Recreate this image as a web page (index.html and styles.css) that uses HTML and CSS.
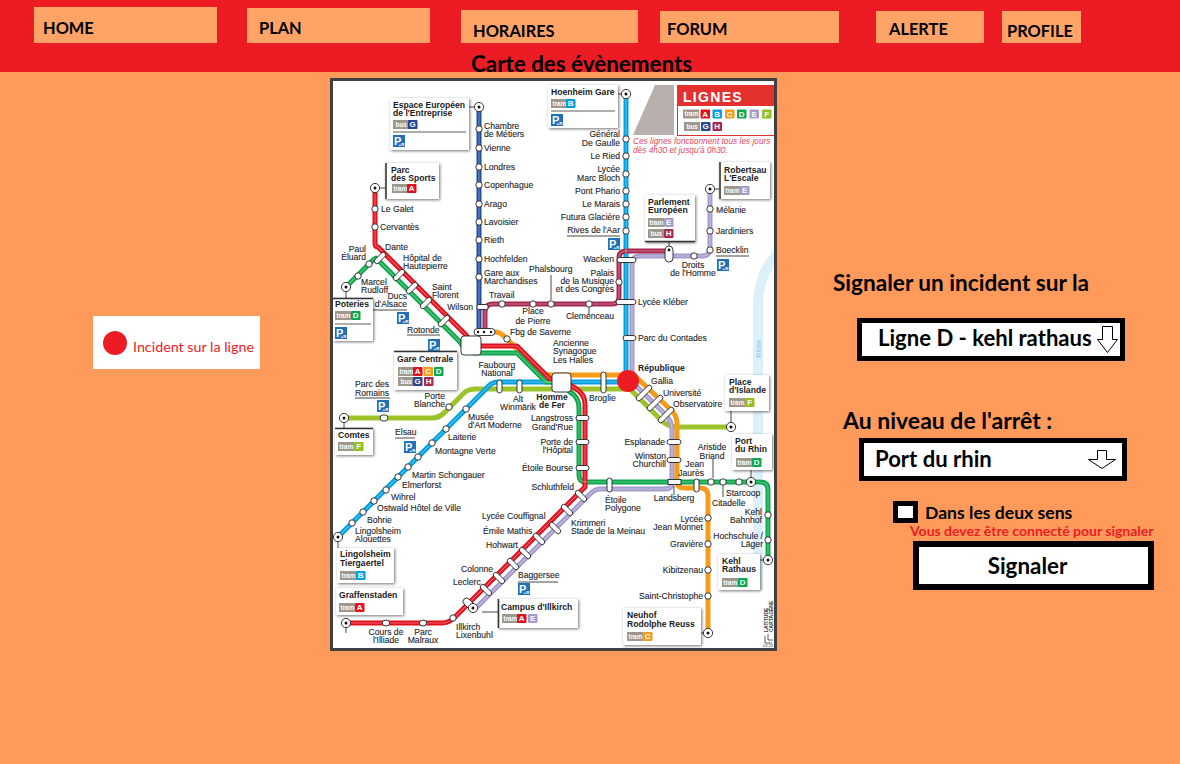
FILE: index.html
```html
<!DOCTYPE html>
<html lang="fr">
<head>
  <meta charset="UTF-8" />
  <meta name="viewport" content="width=device-width, initial-scale=1.0"/>
  <title>Carte des évènements</title>
  <link rel="stylesheet" href="styles.css">
</head>
<body>
  <header class="top">
    <nav class="menu">
      <a class="menu-item home">HOME</a>
      <a class="menu-item plan">PLAN</a>
      <a class="menu-item horaires">HORAIRES</a>
      <a class="menu-item forum">FORUM</a>
      <a class="menu-item alerte">ALERTE</a>
      <a class="menu-item profile">PROFILE</a>
    </nav>
    <h1 class="page-title">Carte des évènements</h1>
  </header>

  <main class="content">
    <div class="legend">
      <span class="legend-dot"></span>
      <span class="legend-label">Incident sur la ligne</span>
    </div>

    <div class="map">
      <svg class="map-svg" viewBox="333 81 441 567" width="441" height="567">
        <defs>
          <g id="term"><circle class="st" r="4.6"/><circle class="dot" r="1.5"/></g>
          <g id="pr"><rect class="pr-box" width="12" height="12"/><text class="pr-p" x="1" y="9.5">P</text><text class="pr-r" x="5.6" y="11">+R</text></g>
          <g id="tram"><rect class="chip" width="16" height="9"/><text class="chip-t" x="1.5" y="6.7">tram</text></g>
          <g id="bus"><rect class="chip" width="16" height="9"/><text class="chip-t" x="2.5" y="6.7">bus</text></g>
          <g id="kA"><rect class="k ka" width="9.5" height="9" rx="1"/><text class="k-t" x="4.7" y="7.3">A</text></g>
          <g id="kB"><rect class="k kb" width="9.5" height="9" rx="1"/><text class="k-t" x="4.7" y="7.3">B</text></g>
          <g id="kC"><rect class="k kc" width="9.5" height="9" rx="1"/><text class="k-t" x="4.7" y="7.3">C</text></g>
          <g id="kD"><rect class="k kd" width="9.5" height="9" rx="1"/><text class="k-t" x="4.7" y="7.3">D</text></g>
          <g id="kE"><rect class="k ke" width="9.5" height="9" rx="1"/><text class="k-t" x="4.7" y="7.3">E</text></g>
          <g id="kF"><rect class="k kf" width="9.5" height="9" rx="1"/><text class="k-t" x="4.7" y="7.3">F</text></g>
          <g id="kG"><rect class="k kg" width="9.5" height="9" rx="1"/><text class="k-t" x="4.7" y="7.3">G</text></g>
          <g id="kH"><rect class="k kh" width="9.5" height="9" rx="1"/><text class="k-t" x="4.7" y="7.3">H</text></g>

          <path id="la" d="M375 188 V243 Q375 247 378 247 L466 335 Q472 346 482 346 H517 L550 379 H560 L575 388 Q585 394 585 404 V487 L471 601 L455 617 Q449 623 442 623 H346"/>
          <path id="lb" d="M626 94 V374 Q626 382 618 382 H498 Q491 382 486 389 L338 537"/>
          <path id="lc" d="M495 332 Q500 332 505 337 L538 370 Q543 375 552 375 H634 L672 411 Q677 416 677 424 V482 Q677 488 684 488 H700 Q708 488 708 496 V633"/>
          <path id="ld" d="M346 287 L369 264 Q375 258 376 258 L460 342 Q466 353 475 353 H517 L546 382 H560 L570 392 Q579 397 579 408 V475 Q579 482 586 482 H760 Q768 482 768 490 V560"/>
          <path id="le" d="M710 189 V248 Q710 256 702 256 H640 Q632 256 632 264 V382 L665 414 Q672 421 672 430 V483 Q672 489 665 489 H600 Q595 489 590 494 L473 611"/>
          <path id="lf" d="M344 418 H432 Q440 418 446 411 L464 393 Q468 389 476 389 H630 L660 419 Q668 427 676 427 H731"/>
          <path id="lg" d="M479 107 V332"/>
          <path id="lh" d="M485 332 V312 Q485 304 493 304 H612 Q619 304 619 297 V258 Q619 251 626 251 H669"/>
        </defs>

        <path class="river" d="M780 252 Q758 272 758 305 V590"/>
        <text class="rhin" transform="translate(761 358) rotate(-90)">Rhin</text>
        <polygon class="wedge" points="655,85 674,85 674,135 633,135"/>

        <!-- lines -->
        <g class="casing">
          <use href="#lb"/><use href="#lf"/><use href="#lc"/><use href="#la"/><use href="#ld"/><use href="#le"/><use href="#lg"/><use href="#lh"/>
        </g>
        <g class="line"><use class="c-f" href="#lf"/><use class="c-e" href="#le"/><use class="c-c" href="#lc"/><use class="c-b" href="#lb"/><use class="c-d" href="#ld"/><use class="c-a" href="#la"/><use class="c-h" href="#lh"/><use class="c-g" href="#lg"/></g>
        <g class="shine"><use href="#la"/><use href="#ld"/><use href="#lh"/><use href="#lg"/><use href="#lb"/><use href="#le"/></g>

        <!-- leader lines -->
        <g class="lead">
          <path d="M469 107 H475 M439 188 H380 M344 423 V428 M338 541 V548 M346 627 V633 M346 288 V298 M373 310 H407 M482 612 L498 612 M725 189 H715 M731 411 V423 M751 470 V478 M760 560 H764 M701 633 H704 M669 242 V246 M618 94 H622 M589 304 V315 M551 275 V300 M713 459 V478 M723 485 V497 M674 486 V495"/>
          <path d="M407 335 H440 M567 236 H620 M716 256 H749 M355 398 H390 M395 438 H415 M518 582 H558"/>
        </g>

        <!-- stations -->
        <g class="st">
          <circle r="3.2" cx="479" cy="129"/><circle r="3.2" cx="479" cy="148"/><circle r="3.2" cx="479" cy="167"/><circle r="3.2" cx="479" cy="185"/><circle r="3.2" cx="479" cy="204"/><circle r="3.2" cx="479" cy="222"/><circle r="3.2" cx="479" cy="240"/><circle r="3.2" cx="479" cy="259"/><circle r="3.2" cx="479" cy="277"/>
          <circle r="3.2" cx="375" cy="209"/><circle r="3.2" cx="375" cy="227"/>
          <circle r="3.2" cx="369" cy="264"/><circle r="3.2" cx="358" cy="276"/>
          <circle r="3.2" cx="502" cy="304"/><circle r="3.2" cx="533" cy="304"/><circle r="3.2" cx="551" cy="304"/><circle r="3.2" cx="589" cy="304"/>
          <circle r="3.2" cx="507" cy="339"/>
          <circle r="3.2" cx="626" cy="139"/><circle r="3.2" cx="626" cy="156"/><circle r="3.2" cx="626" cy="174"/><circle r="3.2" cx="626" cy="191"/><circle r="3.2" cx="626" cy="204"/><circle r="3.2" cx="626" cy="217"/><circle r="3.2" cx="626" cy="231"/>
          <circle r="3.2" cx="619" cy="282"/>
          <circle r="3.2" cx="710" cy="209"/><circle r="3.2" cx="710" cy="231"/><circle r="3.2" cx="710" cy="250"/><circle r="3.2" cx="694" cy="256"/>
          <circle r="3.2" cx="466" cy="409"/><circle r="3.2" cx="446" cy="429"/><circle r="3.2" cx="432" cy="443"/><circle r="3.2" cx="418" cy="457"/><circle r="3.2" cx="408" cy="467"/><circle r="3.2" cx="398" cy="477"/><circle r="3.2" cx="386" cy="490"/><circle r="3.2" cx="374" cy="501"/><circle r="3.2" cx="363" cy="512"/><circle r="3.2" cx="352" cy="523"/>
          <circle r="3.2" cx="449" cy="407"/><ellipse rx="4" ry="3.2" cx="384" cy="418"/>
          <circle r="3.2" cx="453" cy="618"/><ellipse rx="3.6" ry="3" cx="423" cy="623"/><ellipse rx="3.8" ry="3" cx="386" cy="623"/>
          <circle r="3.2" cx="711" cy="482"/><circle r="3.2" cx="723" cy="482"/><circle r="3.2" cx="739" cy="482"/>
          <circle r="3.2" cx="768" cy="515"/><circle r="3.2" cx="768" cy="540"/>
          <circle r="3.2" cx="708" cy="518"/><circle r="3.2" cx="708" cy="544"/><circle r="3.2" cx="708" cy="570"/><circle r="3.2" cx="708" cy="596"/>

          <rect x="477" y="304.5" width="11" height="5" rx="1.5"/>
          <rect x="617" y="257.5" width="19" height="5" rx="2.5"/><rect x="616" y="299.5" width="20" height="5" rx="2.5"/><rect x="623" y="335.5" width="13" height="5" rx="2.5"/>
          <rect x="665" y="246" width="8" height="16" rx="4"/>
          <rect x="497" y="380" width="5" height="13" rx="2.5"/><rect x="517" y="380" width="5" height="13" rx="2.5"/><rect x="601" y="372" width="5" height="21" rx="2.5"/>
          <rect x="667" y="439.5" width="14" height="5" rx="2.5"/><rect x="667" y="457.5" width="14" height="5" rx="2.5"/><rect x="668" y="479.5" width="13" height="5"/>
          <rect x="576" y="415.5" width="13" height="5" rx="2.5"/><rect x="576" y="439.5" width="13" height="5" rx="2.5"/><rect x="576" y="465.5" width="13" height="5" rx="2.5"/>
          <rect x="607" y="478" width="5" height="14" rx="2.5"/><rect x="694" y="479" width="5" height="13" rx="2.5"/>
          <rect x="474" y="328.5" width="21" height="7" rx="3.5"/>

          <rect class="tilt" x="-7" y="-2.5" width="14" height="5" rx="2.5" transform="translate(380 258) rotate(-45)"/>
          <rect class="tilt" x="-7" y="-2.5" width="14" height="5" rx="2.5" transform="translate(399 275) rotate(-45)"/>
          <rect class="tilt" x="-7" y="-2.5" width="14" height="5" rx="2.5" transform="translate(412 288) rotate(-45)"/>
          <rect class="tilt" x="-7" y="-2.5" width="14" height="5" rx="2.5" transform="translate(426 303) rotate(-45)"/>
          <rect class="tilt" x="-7" y="-2.5" width="14" height="5" rx="2.5" transform="translate(444 321) rotate(-45)"/>
          <rect class="tilt" x="-10" y="-2.5" width="20" height="5" rx="2.5" transform="translate(644 393) rotate(-45)"/>
          <rect class="tilt" x="-10" y="-2.5" width="20" height="5" rx="2.5" transform="translate(655 403) rotate(-45)"/>
          <rect class="tilt" x="-10" y="-2.5" width="20" height="5" rx="2.5" transform="translate(666 415) rotate(-45)"/>
          <rect class="tilt" x="-7" y="-2.5" width="14" height="5" rx="2.5" transform="translate(581 496) rotate(45)"/>
          <rect class="tilt" x="-7" y="-2.5" width="14" height="5" rx="2.5" transform="translate(567 510) rotate(45)"/>
          <rect class="tilt" x="-7" y="-2.5" width="14" height="5" rx="2.5" transform="translate(555 528) rotate(45)"/>
          <rect class="tilt" x="-7" y="-2.5" width="14" height="5" rx="2.5" transform="translate(539 539) rotate(45)"/>
          <rect class="tilt" x="-7" y="-2.5" width="14" height="5" rx="2.5" transform="translate(525 553) rotate(45)"/>
          <rect class="tilt" x="-7" y="-2.5" width="14" height="5" rx="2.5" transform="translate(513 564) rotate(45)"/>
          <rect class="tilt" x="-7" y="-2.5" width="14" height="5" rx="2.5" transform="translate(499 578) rotate(45)"/>
          <rect class="tilt" x="-7" y="-2.5" width="14" height="5" rx="2.5" transform="translate(486 590) rotate(45)"/>
          <rect class="tilt" x="-7" y="-3.5" width="14" height="7" rx="3.5" transform="translate(469 604) rotate(45)"/>

          <rect x="461" y="336" width="20" height="19" rx="3"/>
          <rect x="552" y="373" width="19" height="19" rx="3"/>
        </g>
        <circle class="dot" r="1.2" cx="478" cy="332"/><circle class="dot" r="1.2" cx="484" cy="332"/><circle class="dot" r="1.2" cx="491" cy="332"/>
        <circle class="dot" r="1.4" cx="669" cy="250"/>

        <use href="#term" x="479" y="107"/><use href="#term" x="375" y="188"/><use href="#term" x="346" y="287"/>
        <use href="#term" x="626" y="94"/><use href="#term" x="710" y="189"/><use href="#term" x="344" y="418"/>
        <use href="#term" x="338" y="537"/><use href="#term" x="346" y="623"/><use href="#term" x="473" y="608"/>
        <use href="#term" x="731" y="427"/><use href="#term" x="751" y="482"/><use href="#term" x="768" y="560"/><use href="#term" x="708" y="633"/>

        <!-- cards -->
        <g class="card">
          <rect x="390" y="98" width="79" height="52"/><rect x="385" y="163" width="54" height="36"/>
          <rect x="548" y="85" width="70" height="43"/><rect x="333" y="298" width="40" height="43"/>
          <rect x="394" y="351" width="63" height="39"/><rect x="335" y="428" width="38" height="27"/>
          <rect x="337" y="548" width="57" height="35"/><rect x="336" y="588" width="67" height="27"/>
          <rect x="498" y="599" width="80" height="29"/><rect x="623" y="608" width="78" height="37"/>
          <rect x="718" y="554" width="42" height="36"/><rect x="732" y="434" width="40" height="36"/>
          <rect x="725" y="375" width="44" height="36"/><rect x="719" y="162" width="51" height="37"/>
          <rect x="645" y="195" width="50" height="47"/>
        </g>
        <path class="bar" d="M386 163 V199 M720 162 V199 M335 428.5 H373 M498.5 599 V628 M333 298.5 H373 M394 351.5 H457 M645 241.5 H695"/>
        <path class="rule" d="M393 132 H466 M551 111 H615 M335 324 H371"/>

        <g class="ttl">
          <text x="393" y="108">Espace Européen</text><text x="393" y="116">de l'Entreprise</text>
          <text x="391" y="173">Parc</text><text x="391" y="181">des Sports</text>
          <text x="551" y="95">Hoenheim Gare</text>
          <text x="335" y="307">Poteries</text>
          <text x="397" y="362">Gare Centrale</text>
          <text x="338" y="438">Comtes</text>
          <text x="340" y="557">Lingolsheim</text><text x="340" y="566">Tiergaertel</text>
          <text x="339" y="598">Graffenstaden</text>
          <text x="501" y="610">Campus d'Illkirch</text>
          <text x="627" y="618">Neuhof</text><text x="627" y="627">Rodolphe Reuss</text>
          <text x="722" y="564">Kehl</text><text x="722" y="572">Rathaus</text>
          <text x="735" y="444">Port</text><text x="735" y="452">du Rhin</text>
          <text x="729" y="385">Place</text><text x="729" y="393">d'Islande</text>
          <text x="724" y="173">Robertsau</text><text x="724" y="181">L'Escale</text>
          <text x="648" y="205">Parlement</text><text x="648" y="213">Européen</text>
        </g>

        <use href="#bus" x="393" y="120"/><use href="#kG" x="408" y="120"/>
        <use href="#pr" x="393" y="135"/>
        <use href="#tram" x="392" y="184"/><use href="#kA" x="407" y="184"/>
        <use href="#tram" x="551" y="99"/><use href="#kB" x="566" y="99"/>
        <use href="#pr" x="551" y="114"/>
        <use href="#tram" x="335" y="311"/><use href="#kD" x="351" y="311"/>
        <use href="#pr" x="335" y="327"/>
        <use href="#tram" x="398" y="367"/><use href="#kA" x="413" y="367"/><use href="#kC" x="423.5" y="367"/><use href="#kD" x="434" y="367"/>
        <use href="#bus" x="398" y="377"/><use href="#kG" x="413" y="377"/><use href="#kH" x="424" y="377"/>
        <use href="#tram" x="338" y="442"/><use href="#kF" x="354" y="442"/>
        <use href="#tram" x="340" y="571"/><use href="#kB" x="356" y="571"/>
        <use href="#tram" x="339" y="603"/><use href="#kA" x="355" y="603"/>
        <use href="#tram" x="502" y="614"/><use href="#kA" x="517" y="614"/><use href="#kE" x="528" y="614"/>
        <use href="#tram" x="627" y="632"/><use href="#kC" x="643" y="632"/>
        <use href="#tram" x="722" y="578"/><use href="#kD" x="738" y="578"/>
        <use href="#tram" x="736" y="458"/><use href="#kD" x="752" y="458"/>
        <use href="#tram" x="729" y="398"/><use href="#kF" x="745" y="398"/>
        <use href="#tram" x="724" y="186"/><use href="#kE" x="740" y="186"/>
        <use href="#tram" x="648" y="218"/><use href="#kE" x="664" y="218"/>
        <use href="#bus" x="648" y="229"/><use href="#kH" x="664" y="229"/>

        <use href="#pr" x="397" y="312"/><use href="#pr" x="428" y="339"/><use href="#pr" x="608" y="238"/><use href="#pr" x="717" y="259"/>
        <use href="#pr" x="377" y="400"/><use href="#pr" x="404" y="441"/><use href="#pr" x="518" y="583"/>

        <!-- lignes box -->
        <rect class="lignes-box" x="677.5" y="85.5" width="100" height="50"/>
        <rect class="lignes-head" x="677" y="85" width="98" height="21"/>
        <text class="lignes-t" x="683" y="102">LIGNES</text>
        <use href="#tram" x="683" y="109.5"/><use href="#kA" x="700.5" y="109.5"/><use href="#kB" x="712.5" y="109.5"/><use href="#kC" x="725" y="109.5"/><use href="#kD" x="737" y="109.5"/><use href="#kE" x="749.5" y="109.5"/><use href="#kF" x="762" y="109.5"/>
        <use href="#bus" x="684" y="122"/><use href="#kG" x="701" y="122"/><use href="#kH" x="712.5" y="122"/>
        <text class="note" x="633" y="144">Ces lignes fonctionnent  tous les jours</text>
        <text class="note" x="633" y="153">dès 4h30 et jusqu'à 0h30.</text>

        <!-- labels, left aligned -->
        <g class="lbl">
          <text x="484" y="129">Chambre</text><text x="484" y="137">de Métiers</text><text x="484" y="151">Vienne</text><text x="484" y="170">Londres</text><text x="484" y="188">Copenhague</text><text x="484" y="207">Arago</text><text x="484" y="225">Lavoisier</text><text x="484" y="243">Rieth</text><text x="484" y="262">Hochfelden</text><text x="484" y="276">Gare aux</text><text x="484" y="284">Marchandises</text>
          <text x="381" y="212">Le Galet</text><text x="380" y="230">Cervantès</text><text x="385" y="250">Dante</text>
          <text x="361" y="285">Marcel</text><text x="361" y="293">Rudloff</text>
          <text x="403" y="261">Hôpital de</text><text x="403" y="269">Hautepierre</text>
          <text x="432" y="290">Saint</text><text x="432" y="298">Florent</text>
          <text x="407" y="333">Rotonde</text><text x="489" y="298">Travail</text><text x="529" y="272">Phalsbourg</text><text x="510" y="335">Fbg de Saverne</text>
          <text x="553" y="346">Ancienne</text><text x="553" y="354">Synagogue</text><text x="553" y="363">Les Halles</text>
          <text x="638" y="305">Lycée Kléber</text><text x="638" y="341">Parc du Contades</text>
          <text x="716" y="213">Mélanie</text><text x="716" y="234">Jardiniers</text><text x="716" y="253">Boecklin</text>
          <text x="468" y="420">Musée</text><text x="468" y="428">d'Art Moderne</text><text x="448" y="440">Laiterie</text><text x="435" y="454">Montagne Verte</text><text x="412" y="478">Martin Schongauer</text><text x="402" y="488">Elmerforst</text><text x="391" y="500">Wihrel</text><text x="377" y="511">Ostwald Hôtel de Ville</text><text x="367" y="523">Bohrie</text><text x="355" y="534">Lingolsheim</text><text x="355" y="542">Alouettes</text>
          <text x="395" y="435">Elsau</text>
          <text x="482" y="519">Lycée Couffignal</text><text x="483" y="534">Émile Mathis</text><text x="486" y="548">Hohwart</text><text x="461" y="572">Colonne</text><text x="453" y="585">Leclerc</text><text x="518" y="578">Baggersee</text><text x="456" y="630">Illkirch</text><text x="456" y="638">Lixenbuhl</text>
          <text x="589" y="401">Broglie</text><text x="651" y="384">Gallia</text><text x="663" y="396">Université</text><text x="673" y="407">Observatoire</text>
          <text x="726" y="496">Starcoop</text><text x="712" y="506">Citadelle</text><text x="605" y="503">Étoile</text><text x="605" y="511">Polygone</text><text x="571" y="526">Krimmeri</text><text x="571" y="534">Stade de la Meinau</text>
        </g>
        <text class="ttl-sm" x="638" y="371">République</text>
        <text class="ttl-sm mid" x="552" y="400">Homme</text><text class="ttl-sm mid" x="552" y="408">de Fer</text>

        <!-- labels, right aligned -->
        <g class="lbl end">
          <text x="366" y="252">Paul</text><text x="366" y="260">Éluard</text>
          <text x="407" y="299">Ducs</text><text x="407" y="307">d'Alsace</text>
          <text x="473" y="310">Wilson</text>
          <text x="620" y="137">Général</text><text x="620" y="146">De Gaulle</text><text x="620" y="159">Le Ried</text><text x="620" y="172">Lycée</text><text x="620" y="181">Marc Bloch</text><text x="620" y="194">Pont Phario</text><text x="620" y="207">Le Marais</text><text x="620" y="220">Futura Glacière</text><text x="620" y="233">Rives de l'Aar</text>
          <text x="614" y="262">Wacken</text><text x="614" y="276">Palais</text><text x="614" y="284">de la Musique</text><text x="614" y="292">et des Congrès</text>
          <text x="389" y="387">Parc des</text><text x="389" y="396">Romains</text>
          <text x="445" y="399">Porte</text><text x="445" y="407">Blanche</text>
          <text x="573" y="421">Langstross</text><text x="573" y="430">Grand'Rue</text><text x="573" y="445">Porte de</text><text x="573" y="453">l'Hôpital</text><text x="573" y="471">Étoile Bourse</text><text x="574" y="490">Schluthfeld</text>
          <text x="665" y="445">Esplanade</text><text x="666" y="459">Winston</text><text x="666" y="467">Churchill</text>
          <text x="704" y="467">Jean</text><text x="704" y="476">Jaurès</text>
          <text x="703" y="522">Lycée</text><text x="703" y="530">Jean Monnet</text><text x="703" y="547">Gravière</text><text x="703" y="573">Kibitzenau</text><text x="703" y="599">Saint-Christophe</text>
          <text x="762" y="515">Kehl</text><text x="762" y="523">Bahnhof</text><text x="763" y="539">Hochschule /</text><text x="763" y="547">Läger</text>
        </g>

        <!-- labels, centred -->
        <g class="lbl mid">
          <text x="533" y="314">Place</text><text x="533" y="324">de Pierre</text>
          <text x="497" y="368">Faubourg</text><text x="497" y="376">National</text>
          <text x="590" y="319">Clemenceau</text>
          <text x="693" y="268">Droits</text><text x="693" y="276">de l'Homme</text>
          <text x="518" y="402">Alt</text><text x="518" y="410">Winmärik</text>
          <text x="712" y="450">Aristide</text><text x="712" y="459">Briand</text>
          <text x="674" y="501">Landsberg</text>
          <text x="386" y="635">Cours de</text><text x="386" y="643">l'Illiade</text>
          <text x="423" y="635">Parc</text><text x="423" y="643">Malraux</text>
        </g>

        <text class="credit" transform="translate(768 632) rotate(-90)">LATITUDE</text>
        <text class="credit" transform="translate(773 632) rotate(-90)">CARTAGÈNE</text>
        <path class="credit-mark" d="M765 636 V643 H772 M768 634 V640 H773"/>
        <text class="stamp" x="763" y="647">03.23</text>

        <!-- incident marker -->
        <circle class="marker" cx="628" cy="381" r="11"/>
      </svg>
    </div>

    <section class="report">
      <h2 class="report-title">Signaler un incident sur la</h2>
      <div class="picker line-picker">
        <span>Ligne D - kehl rathaus</span>
        <svg class="arrow" width="21" height="27" viewBox="0 0 21 27"><path d="M5.5 .5 H15.5 V13.5 H20.5 L10.5 26.5 L.5 13.5 H5.5 Z"/></svg>
      </div>
      <h2 class="report-title stop-title">Au niveau de l'arrêt :</h2>
      <div class="picker stop-picker">
        <span>Port du rhin</span>
        <svg class="arrow" width="28" height="19" viewBox="0 0 28 19"><path d="M9.5 .5 H18.5 V9.5 H27.5 L14 18.5 L.5 9.5 H9.5 Z"/></svg>
      </div>
      <label class="both-ways"><span class="check"></span>Dans les deux sens</label>
      <p class="login-note">Vous devez être connecté pour signaler</p>
      <button class="send" type="button">Signaler</button>
    </section>
  </main>
</body>
</html>
```

FILE: styles.css
```css
body {
  font-family: Lato, "Open Sans", sans-serif;
  margin: 0;
  padding: 0;
  background-color: #ff9a5a;
  color: black;
  height: 764px;
  overflow: hidden;
}

/* header */
.top {
  background-color: #ed1c24;
  height: 72px;
}
.menu {
  display: flex;
  align-items: flex-end;
  height: 43px;
  padding-left: 34px;
}
.menu-item {
  display: block;
  background-color: #ffa366;
  font-weight: bold;
  font-size: 16.4px;
  line-height: 20px;
  box-sizing: border-box;
}
.home { width: 183px; height: 36px; padding: 11px 0 0 9px; }
.plan { width: 183px; height: 35px; margin-left: 30px; padding: 10px 0 0 12px; }
.horaires { width: 177px; height: 33px; margin-left: 31px; padding: 11px 0 0 12px; }
.forum { width: 179px; height: 32px; margin-left: 22px; padding: 8px 0 0 7px; }
.alerte { width: 108px; height: 32px; margin-left: 37px; padding: 8px 0 0 13px; }
.profile { width: 79px; height: 32px; margin-left: 18px; padding: 10px 0 0 5px; }
.page-title {
  margin: 7px 0 0 471px;
  font-size: 22.4px;
  line-height: 28px;
  font-weight: bold;
}

/* main row */
.content {
  display: flex;
  align-items: flex-start;
  padding: 6px 0 0 93px;
}
.legend {
  display: flex;
  align-items: center;
  gap: 6px;
  width: 167px;
  height: 53px;
  box-sizing: border-box;
  margin-top: 238px;
  padding-left: 10px;
  background: white;
  color: #ed1c24;
  font-size: 14.3px;
}
.legend-dot {
  width: 24px;
  height: 24px;
  border-radius: 50%;
  background-color: #ed1c24;
}
.legend-label {
  margin-top: 8px;
}
.map {
  margin-left: 70px;
  border: 3px solid #404040;
  background: white;
  line-height: 0;
}

/* report form */
.report {
  display: flex;
  flex-direction: column;
  align-items: flex-start;
  margin-left: 56px;
  padding-top: 192px;
  width: 330px;
}
.report-title {
  margin: 0;
  font-size: 22.6px;
  line-height: 26px;
  font-weight: bold;
}
.picker {
  display: flex;
  align-items: center;
  justify-content: space-between;
  box-sizing: border-box;
  width: 268px;
  height: 43px;
  border: 5px solid black;
  background: white;
  font-weight: bold;
  font-size: 22.1px;
}
.line-picker { margin: 22px 0 0 24px; padding: 0 2px 0 16px; }
.line-picker span { margin-bottom: 4px; }
.stop-title { margin: 46px 0 0 10px; font-size: 23px; }
.stop-picker { margin: 5px 0 0 26px; padding: 0 6px 0 11px; }
.stop-picker span { margin-bottom: 2px; }
.arrow path {
  fill: white;
  stroke: black;
  stroke-width: 1;
}
.both-ways {
  display: flex;
  align-items: center;
  gap: 7px;
  margin: 20px 0 0 60px;
  font-weight: bold;
  font-size: 17.6px;
}
.check {
  width: 25px;
  height: 22px;
  box-sizing: border-box;
  border: 5px solid black;
  background: white;
}
.login-note {
  margin: -1px 0 1px 77px;
  color: #ed1c24;
  font-weight: bold;
  font-size: 14px;
  line-height: 18px;
}
.send {
  margin: 0 0 0 80px;
  width: 241px;
  height: 49px;
  border: 6px solid black;
  background: white;
  font-family: inherit;
  font-weight: bold;
  font-size: 22.4px;
  padding: 0 12px 0 0;
}

/* map drawing */
.map-svg text { font-family: "Liberation Sans", Arial, sans-serif; }
.river { fill: none; stroke: #dcf0fa; stroke-width: 10; }
.rhin { fill: #9fd3e8; font-size: 8px; font-weight: bold; }
.wedge { fill: #b8b0ac; }
.casing use { fill: none; stroke: white; stroke-width: 6.5; }
.line use { fill: none; stroke-width: 5; stroke-linejoin: round; }
.shine use { fill: none; stroke: white; stroke-opacity: .35; stroke-width: 1.1; }
.c-a { stroke: #e30f1d; }
.c-b { stroke: #00a0e2; }
.c-c { stroke: #f59c1a; }
.c-d { stroke: #0ba84a; }
.c-e { stroke: #a59ccd; }
.c-f { stroke: #9dc32b; }
.c-g { stroke: #1f4e9e; }
.c-h { stroke: #a8294f; }
.lead { fill: none; stroke: #333; stroke-width: .9; }
.st { fill: white; stroke: #222; stroke-width: .9; }
.dot { fill: #111; stroke: none; }
.card rect { fill: white; filter: drop-shadow(1.5px 1.5px 1.5px rgba(0, 0, 0, .55)); }
.bar { fill: none; stroke: #333; stroke-width: 1.6; }
.rule { fill: none; stroke: #333; stroke-width: .8; }
.ttl text, .ttl-sm { font-size: 8.6px; font-weight: bold; fill: #1b1b1b; }
.lbl text { font-size: 8.6px; fill: #1f1f2c; stroke: #1f1f2c; stroke-width: .12; }
.end text { text-anchor: end; }
.mid text, text.mid { text-anchor: middle; }
.chip { fill: #9d988a; }
.chip-t { font-size: 6.4px; font-weight: bold; fill: white; }
.k-t { font-size: 8px; font-weight: bold; fill: white; text-anchor: middle; }
.ka { fill: #e30f1d; }
.kb { fill: #00a0e2; }
.kc { fill: #f59c1a; }
.kd { fill: #0ba84a; }
.ke { fill: #a59ccd; }
.kf { fill: #93c01f; }
.kg { fill: #27469a; }
.kh { fill: #a8294f; }
.pr-box { fill: #1f70b8; }
.pr-p { font-size: 11px; font-weight: bold; fill: white; }
.pr-r { font-size: 4.4px; font-weight: bold; fill: white; }
.lignes-box { fill: white; stroke: #e4312f; stroke-width: 1; }
.lignes-head { fill: #e4312f; }
.lignes-t { font-size: 14px; font-weight: bold; fill: white; letter-spacing: 1.3px; }
.note { font-size: 8.3px; font-style: italic; fill: #e8465f; }
.credit { font-size: 5px; font-weight: bold; fill: #333; }
.credit-mark { fill: none; stroke: #333; stroke-width: .8; }
.stamp { font-size: 4px; fill: #333; }
.marker { fill: #ed1c24; }
```
